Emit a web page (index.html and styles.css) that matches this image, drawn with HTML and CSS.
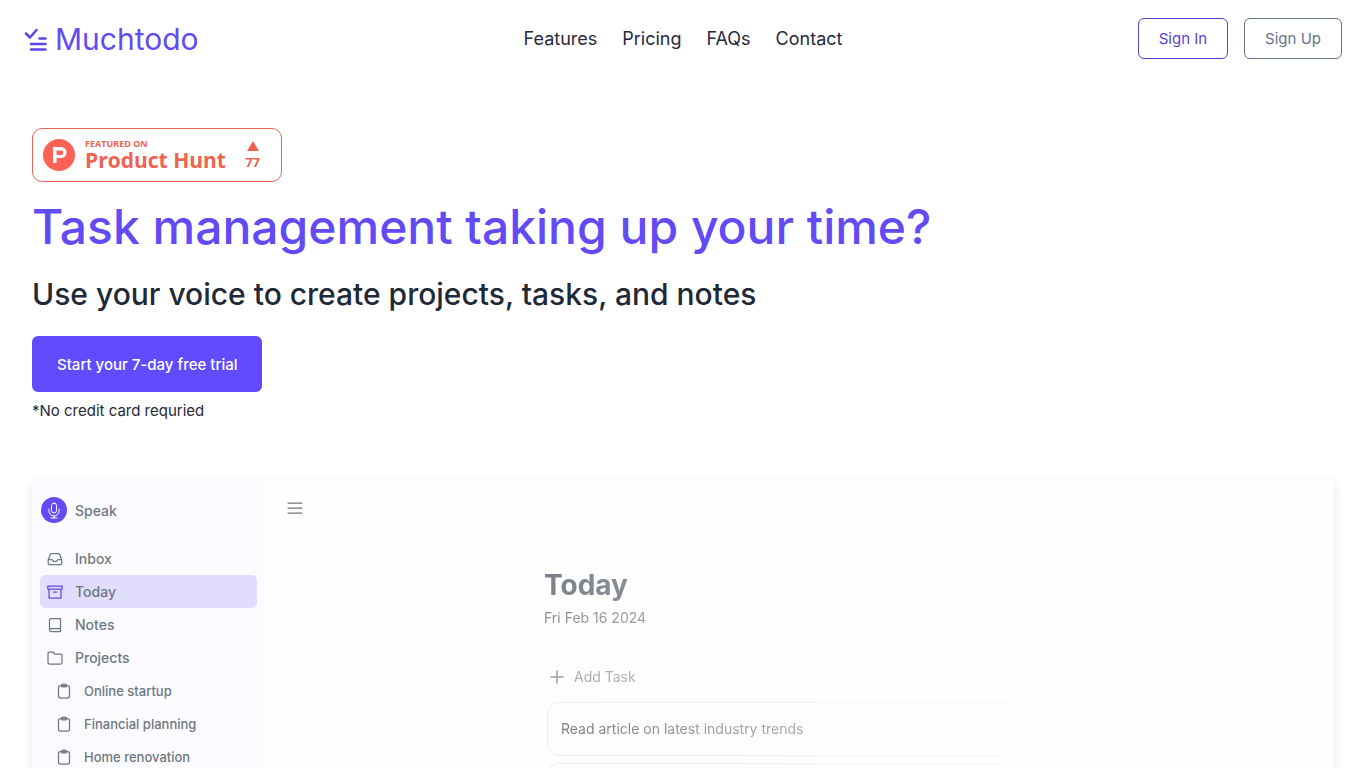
FILE: index.html
```html
<!DOCTYPE html>
<html lang="en">
<head>
<meta charset="utf-8">
<meta name="viewport" content="width=device-width, initial-scale=1">
<title>Muchtodo</title>
<link rel="stylesheet" href="styles.css">
</head>
<body>
<svg class="defs" width="0" height="0" aria-hidden="true">
  <symbol id="clipboard" viewBox="0 0 16 16">
    <rect x="2.5" y="2.5" width="11" height="12.5" rx="2"/>
    <path d="M5.5 2.5c0-1 .6-1.500 1.500-1.500h2c.9 0 1.500.5 1.500 1.500v.4c0 .6-.4 1-1 1h-3c-.6 0-1-.4-1-1z"/>
  </symbol>
</svg>
<header class="header">
  <a class="logo" href="#">
    <svg class="logo-mark" viewBox="0 0 24 24" aria-hidden="true">
      <path d="M2 6.500 6 10.500 12.500 3"/>
      <path d="M15.500 11.500h6M7 17h14.500M7 22.500h14.500"/>
    </svg>
    <span>Muchtodo</span>
  </a>
  <nav class="nav">
    <a href="#features">Features</a>
    <a href="#pricing">Pricing</a>
    <a href="#faqs">FAQs</a>
    <a href="#contact">Contact</a>
  </nav>
  <div class="account">
    <button class="btn btn-primary" type="button">Sign In</button>
    <button class="btn btn-muted" type="button">Sign Up</button>
  </div>
</header>
<main class="page">
  <a class="badge" href="#">
    <svg class="badge-mark" viewBox="0 0 32 32" aria-hidden="true">
      <circle cx="16" cy="16" r="16" fill="#ff6154"/>
      <path d="M10 8h8a5.500 5.500 0 0 1 0 11h-4.500v5H10zM13.500 11.500v4.500H18a2.250 2.250 0 0 0 0-4.500z" fill="#fff" fill-rule="evenodd"/>
    </svg>
    <span class="badge-text">
      <span class="badge-small">FEATURED ON</span>
      <span class="badge-name">Product Hunt</span>
    </span>
    <span class="badge-votes">
      <svg class="badge-arrow" viewBox="0 0 12 10" aria-hidden="true"><path d="M6 0 12 10H0z" fill="#ee6352"/></svg>
      <span>77</span>
    </span>
  </a>
  <h1 class="title">Task management taking up your time?</h1>
  <h2 class="subtitle">Use your voice to create projects, tasks, and notes</h2>
  <button class="cta" type="button">Start your 7-day free trial</button>
  <p class="note">*No credit card requried</p>

  <section class="preview" aria-label="App preview">
    <aside class="sidebar">
      <button class="speak" type="button">
        <svg class="mic" viewBox="0 0 26 26" aria-hidden="true">
          <circle cx="13" cy="13" r="13" fill="#624bf5"/>
          <rect x="10.500" y="6" width="5" height="10" rx="2.500"/>
          <path d="M8 12v2a5 5 0 0 0 10 0v-2M13 19v2M10 21h6"/>
        </svg>
        <span>Speak</span>
      </button>
      <ul class="menu">
        <li><a class="item" href="#">
          <svg class="icon" viewBox="0 0 16 16" aria-hidden="true"><path d="M1.200 9 3.200 3.700C3.500 3 4 2.700 4.700 2.700h6.600c.7 0 1.200.3 1.500 1L14.800 9v3.300c0 .8-.6 1.400-1.400 1.400H2.600c-.8 0-1.400-.6-1.400-1.400zM1.200 8.500h3.300c.5 0 .8.2 1 .6.4.9 1.300 1.500 2.500 1.500s2.100-.6 2.500-1.500c.2-.4.5-.6 1-.6h3.300"/></svg>
          <span>Inbox</span></a></li>
        <li><a class="item active" href="#">
          <svg class="icon" viewBox="0 0 16 16" aria-hidden="true"><path d="M.8 2h14.400v3H.8zM2 5v9h12V5M6.500 8h3"/></svg>
          <span>Today</span></a></li>
        <li><a class="item" href="#">
          <svg class="icon" viewBox="0 0 16 16" aria-hidden="true"><path d="M13.500 11.500v-10H4c-.8 0-1.500.7-1.500 1.500v10c0 .8.700 1.500 1.500 1.500h9.500v-3H4c-.8 0-1.500.7-1.500 1.500"/></svg>
          <span>Notes</span></a></li>
        <li><a class="item" href="#">
          <svg class="icon" viewBox="0 0 16 16" aria-hidden="true"><path d="M1 3.500c0-.8.600-1.500 1.500-1.500H6l2 2.200h5.500c.9 0 1.500.7 1.500 1.500v6.800c0 .8-.6 1.500-1.500 1.500h-11C1.600 14 1 13.300 1 12.500z"/></svg>
          <span>Projects</span></a></li>
        <li><a class="item sub" href="#"><svg class="icon" aria-hidden="true"><use href="#clipboard"/></svg><span>Online startup</span></a></li>
        <li><a class="item sub" href="#"><svg class="icon" aria-hidden="true"><use href="#clipboard"/></svg><span>Financial planning</span></a></li>
        <li><a class="item sub" href="#"><svg class="icon" aria-hidden="true"><use href="#clipboard"/></svg><span>Home renovation</span></a></li>
      </ul>
    </aside>
    <div class="board">
      <button class="toggle" type="button" aria-label="Toggle menu">
        <svg class="icon" viewBox="0 0 16 16" aria-hidden="true"><path d="M1 3h14M1 8h14M1 13h14"/></svg>
      </button>
      <div class="tasks">
        <h3 class="day">Today</h3>
        <p class="date">Fri Feb 16 2024</p>
        <button class="add" type="button">
          <svg class="plus" viewBox="0 0 14 14" aria-hidden="true"><path d="M7 1v12M1 7h12"/></svg>
          <span>Add Task</span>
        </button>
        <ul class="task-list">
          <li class="task">Read article on latest industry trends</li>
          <li class="task"></li>
        </ul>
      </div>
    </div>
  </section>
</main>
</body>
</html>
```
FILE: styles.css
```css
* { box-sizing: border-box; }

body {
  margin: 0;
  height: 100vh;
  overflow: hidden;
  background: #fff;
  color: #1f2937;
  font-family: Inter, "Liberation Sans", sans-serif;
}

a { color: inherit; text-decoration: none; }
button { font-family: inherit; background: none; border: 0; padding: 0; cursor: pointer; }
h1, h2, h3, p, ul { margin: 0; padding: 0; }
ul { list-style: none; }
svg { flex: none; fill: none; stroke-linejoin: round; }
.defs { display: block; }

.header {
  display: grid;
  grid-template-columns: 1fr auto 1fr;
  align-items: center;
  height: 77px;
  padding: 0 24px;
}
.logo {
  display: flex;
  align-items: center;
  gap: 7px;
  color: #624bf5;
  font-size: 30px;
  line-height: 36px;
}
.logo-mark { width: 24px; height: 24px; stroke: #5b45e0; stroke-width: 2.5; stroke-linecap: round; }
.nav { display: flex; gap: 25px; font-size: 18px; line-height: 28px; color: #272a3f; }
.account { display: flex; justify-content: flex-end; gap: 16px; }
.btn {
  height: 41px;
  padding: 0 20px;
  border: 1px solid;
  border-radius: 6px;
  font-size: 15px;
}
.btn-primary { color: #5b3fd6; }
.btn-muted { color: #64748b; }

.page { padding: 51px 32px 0; }
.badge {
  display: flex;
  align-items: center;
  width: 250px;
  height: 54px;
  padding: 0 21px 0 10px;
  border: 1px solid #e0655c;
  border-radius: 10px;
  color: #ee6352;
  font-family: "Open Sans", "Noto Sans", sans-serif;
  font-weight: 700;
}
.badge-mark { width: 32px; height: 32px; margin-right: 10px; }
.badge-text { display: flex; flex-direction: column; }
.badge-small { font-size: 9px; line-height: 10px; }
.badge-name { font-size: 21px; line-height: 22px; }
.badge-votes { display: flex; flex-direction: column; align-items: center; gap: 3px; margin-left: auto; font-size: 13px; line-height: 16px; }
.badge-arrow { width: 12px; height: 10px; }

.title { margin-top: 16px; color: #624bf5; font-size: 48px; font-weight: 500; line-height: 58px; }
.subtitle { margin-top: 20px; font-size: 30px; font-weight: 500; line-height: 36px; }
.cta {
  display: block;
  height: 56px;
  margin-top: 24px;
  padding: 0 25px;
  border-radius: 6px;
  background: #624bff;
  color: #fff;
  font-size: 15px;
  font-weight: 500;
}
.note { margin-top: 8px; font-size: 15px; line-height: 22px; }

.preview {
  display: flex;
  margin-top: 57px;
  border-radius: 6px;
  background: #fefefe;
  box-shadow: 0 3px 10px rgba(0, 0, 0, 0.11);
}
.sidebar {
  width: 234px;
  padding: 18px 9px 32px 8px;
  border-radius: 6px 0 0 6px;
  background: #fcfbff;
  color: #6d7880;
}
.speak {
  display: flex;
  align-items: center;
  gap: 8px;
  margin-left: 1px;
  color: inherit;
  font-size: 14px;
  font-weight: 500;
}
.mic { width: 26px; height: 26px; stroke: #fff; stroke-width: 1; stroke-linecap: round; }
.mic circle { stroke: none; }
.menu { margin-top: 19px; }
.item {
  display: flex;
  align-items: center;
  gap: 12px;
  height: 33px;
  padding: 0 7px;
  border-radius: 5px;
  font-size: 14px;
  font-weight: 500;
}
.item.active { background: #e1defd; }
.item.active .icon { stroke: #624bda; }
.item.sub { padding-left: 16px; font-size: 13px; }
.icon { width: 16px; height: 16px; stroke: #6d7880; stroke-width: 1.25; stroke-linecap: round; }

.board { flex: 1; padding: 21px 7% 0 21px; }
.toggle { display: block; }
.tasks {
  margin: 48px 0 0 257px;
  -webkit-mask-image: linear-gradient(to right, #000, transparent 100%);
  mask-image: linear-gradient(to right, #000, transparent 100%);
}
.day { color: #7a8088; font-size: 28px; line-height: 36px; }
.date { margin-top: 5px; color: #8b9096; font-size: 14px; line-height: 20px; }
.add { display: flex; align-items: center; gap: 10px; margin: 39px 0 0 6px; color: #a4a9ae; font-size: 14px; line-height: 20px; }
.plus { width: 14px; height: 14px; stroke: #989ca1; stroke-width: 1.5; stroke-linecap: round; }
.task-list { display: flex; flex-direction: column; gap: 7px; margin: 15px 0 0 3px; }
.task {
  min-height: 54px;
  padding: 16px 13px;
  border: 1px solid #ececee;
  border-radius: 12px;
  color: #777e85;
  font-size: 14px;
  line-height: 20px;
}
```
